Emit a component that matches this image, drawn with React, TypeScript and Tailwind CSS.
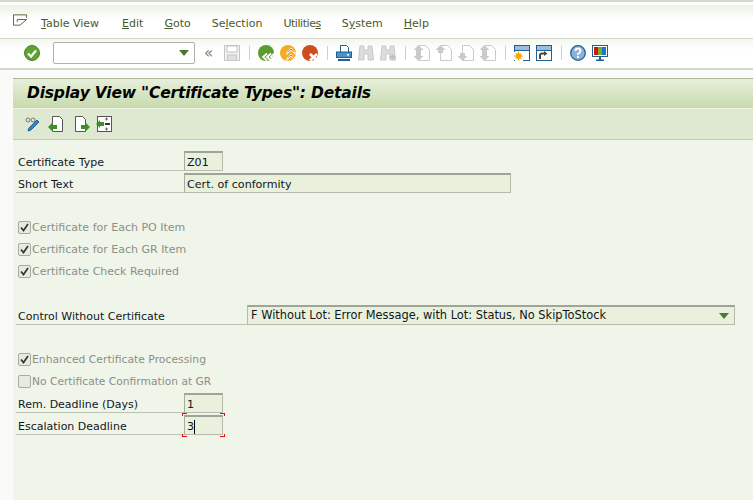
import React from "react";

// before mnemonic, mnemonic, after, spacing fix for the item
const menus: [string, string, string, string][] = [
  ["", "T", "able View", "mr-[2px]"],
  ["", "E", "dit", ""],
  ["", "G", "oto", ""],
  ["Se", "l", "ection", ""],
  ["Utilitie", "s", "", "tracking-[-0.450px]"],
  ["S", "y", "stem", ""],
  ["", "H", "elp", ""],
];

function Sep() {
  return <div className="w-px h-[14px] ml-[3px] mr-[2px] bg-[#c3dca8]" />;
}

function Icon({ children, className = "" }: { children: React.ReactNode; className?: string }) {
  return (
    <svg viewBox="0 0 16 16" className={`w-4 h-4 shrink-0 ${className}`}>
      {children}
    </svg>
  );
}

// grey page with a corner fold, used by the four disabled nav buttons
function NavPage({ up, down }: { up?: boolean; down?: boolean }) {
  return (
    <Icon>
      <path d="M4.500 0.500h7l4 4v11h-11z" fill="#fff" stroke="#cacaca" />
      {up && <path d="M4.500 0L9.500 5H7v3H2V5H-0.500z" fill="#cacaca" />}
      {down && <path d="M4.500 16L9.500 11H7V8H2v3H-0.500z" fill="#cacaca" />}
    </Icon>
  );
}

function WindowIcon({ children }: { children: React.ReactNode }) {
  return (
    <Icon>
      <rect x="0.500" y="0.500" width="15" height="15" fill="#fff" stroke="#1f6090" />
      <rect x="1" y="1" width="14" height="4" fill="#9dbde0" />
      <path d="M0 5.500h16" stroke="#1f6090" />
      {children}
    </Icon>
  );
}

function Binoculars({ plus }: { plus?: boolean }) {
  return (
    <Icon>
      <path d="M2 1h4v4h4V1h4l1.500 14H10V9H6v6H0.500z" fill="#dcdcdc" stroke="#c8c8c8" />
      {plus && <path d="M12.500 9v6M9.500 12h6" stroke="#c0c0c0" strokeWidth="2" />}
    </Icon>
  );
}

function Toolbar() {
  return (
    <div className="flex items-center h-[31px] shrink-0 pl-[24px] pb-px bg-gradient-to-b from-[#f4f8f0] to-white to-40% border-b-2 border-[#d3d8cc]">
      <Icon>
        <circle cx="8" cy="8" r="7.500" fill="#5fa335" stroke="#48802a" />
        <path d="M4 8.500l3 3 5-6" fill="none" stroke="#fff" strokeWidth="2.200" />
      </Icon>
      <div className="ml-[13px] w-[142px] h-[22px] flex items-center justify-end pr-[5px] bg-white rounded-[2px] border border-[#b0b3a8]">
        <div className="w-0 h-0 border-x-[5px] border-x-transparent border-t-[6px] border-t-[#4b7a32]" />
      </div>
      <span className="ml-[9px] w-[11px] text-[15px] leading-none text-[#777]">«</span>
      <div className="ml-[9px] flex items-center gap-[6px]">
        <Icon>
          <path d="M0.500 0.500h15v15h-15z" fill="#f2f2f2" stroke="#c4c4c4" />
          <rect x="3" y="1" width="10" height="6" fill="#fff" stroke="#c4c4c4" />
          <rect x="3.500" y="10" width="9" height="5.500" fill="#e0e0e0" stroke="#c4c4c4" />
        </Icon>
        <Sep />
        <Icon>
          <circle cx="8" cy="8" r="8" fill="#5b9c2e" />
          <path d="M9 8.500l-4 3.500 4 3.500M13 8.500l-4 3.500 4 3.500M16.500 8.500l-3.500 3.500 3.500 3.500" fill="none" stroke="#fff" strokeWidth="1.800" />
        </Icon>
        <Icon>
          <circle cx="8" cy="8" r="8" fill="#f7ab1e" />
          <path d="M6.500 7l4.500-4.500L15.500 7v3L11 5.500 6.500 10zM6.500 13l4.500-4.500 4.500 4.500v3L11 11.500 6.500 16z" fill="#fff" />
          <path d="M7.500 7l3.500-3 3.500 3M7.500 13l3.500-3 3.500 3" fill="none" stroke="#e2671a" />
        </Icon>
        <Icon>
          <circle cx="8" cy="8" r="8" fill="#cf4f1c" />
          <path d="M8 9l7 6.500M15 9l-7 6.500" stroke="#fff" strokeWidth="2.600" />
        </Icon>
        <Sep />
        <Icon>
          <path d="M4.500 0.500h6l2 2v5h-8z" fill="#fff" stroke="#1f6090" />
          <rect x="0.500" y="7" width="15" height="5.500" fill="#4d93c8" stroke="#1f6090" />
          <rect x="2" y="14" width="12" height="2" fill="#1f6090" />
          <rect x="11" y="9" width="2" height="1.500" fill="#fff" />
        </Icon>
        <Binoculars />
        <Binoculars plus />
        <Sep />
        <NavPage up down />
        <NavPage up />
        <NavPage down />
        <NavPage up down />
        <Sep />
        <WindowIcon>
          <path d="M0 7h1v9h8v-1H0z" fill="#fff" />
          <path d="M4.500 6.500v9M0 11h9M1.500 8l6 6M7.500 8l-6 6" stroke="#f7a600" />
          <circle cx="4.500" cy="11" r="2.800" fill="#f7a600" />
        </WindowIcon>
        <WindowIcon>
          <path d="M4 14v-3.500q0-2 2-2h3" fill="none" stroke="#444" strokeWidth="2" />
          <path d="M8 6l3.500 2.500L8 11z" fill="#444" />
        </WindowIcon>
        <Sep />
        <Icon>
          <circle cx="8" cy="8" r="7.300" fill="#8db1d8" stroke="#1f6090" strokeWidth="1.300" />
          <path d="M5.500 6q0-2.500 2.500-2.500T10.500 6q0 1.500-2.500 2.800V10" fill="none" stroke="#fff" strokeWidth="1.800" />
          <rect x="7" y="11" width="2" height="2" fill="#fff" />
        </Icon>
        <Icon>
          <rect x="0.500" y="0.500" width="15" height="11" fill="#fff" stroke="#1f6090" />
          <rect x="2" y="2" width="4" height="8" fill="#cf1414" />
          <rect x="6" y="2" width="4" height="8" fill="#7cab2c" />
          <rect x="10" y="2" width="4" height="8" fill="#1a78c6" />
          <path d="M7 12h2v2.500H7zM4 14.500h8V16H4z" fill="#1f6090" />
        </Icon>
      </div>
    </div>
  );
}

function AppToolbar() {
  return (
    <div className="flex items-center h-[31px] shrink-0 pl-[12px] bg-[#dfe8d0] border-b border-[#c0cdb0]">
      <Icon>
        <circle cx="3" cy="4" r="2" fill="none" stroke="#777" />
        <circle cx="8" cy="4" r="2" fill="none" stroke="#777" />
        <path d="M3 15l1-3 8-8 2 2-8 8z" fill="#3b84c4" stroke="#1f6090" />
      </Icon>
      <Icon className="ml-[7px]">
        <path d="M4.500 0.500h7l3 3v12h-10z" fill="#fff" stroke="#555" />
        <path d="M0 11l4.500-4.500V9H9v4H4.500v2.500z" fill="#3f8f28" />
      </Icon>
      <Icon className="ml-[10px]">
        <path d="M1.500 0.500h7l3 3v12h-10z" fill="#fff" stroke="#555" />
        <path d="M16 11l-4.500-4.500V9H7v4h4.500v2.500z" fill="#3f8f28" />
      </Icon>
      <Icon className="ml-[6px]">
        <rect x="1.500" y="0.500" width="14" height="15" fill="#fff" stroke="#555" />
        <path d="M0 8l4-4v2h4v4H4v2z" fill="#3f8f28" />
        <path d="M9 8h5" stroke="#333" strokeWidth="2" />
        <path d="M9 3h3M9 13h3M10.500 1.500v3M10.500 11.500v3" stroke="#666" />
      </Icon>
    </div>
  );
}

function Check({ checked, label, size = "text-[11px]" }: { checked: boolean; label: string; size?: string }) {
  return (
    <div className="flex items-center h-[22px] pl-[5px] text-[#8c8f88]">
      <div className="w-[13px] h-[13px] -mt-px flex items-center justify-center rounded-[2px] border border-[#a8ab9f] bg-[#e6ebdf]">
        {checked && (
          <svg viewBox="0 0 11 11" className="w-[11px] h-[11px]">
            <path d="M2 5.500l2.500 3L9 2" fill="none" stroke="#2c3a2a" strokeWidth="1.700" />
          </svg>
        )}
      </div>
      <span className={`ml-px pt-px ${size}`}>{label}</span>
    </div>
  );
}

function Field({
  label,
  children,
  labelWidth = "w-[168px]",
}: {
  label: string;
  children: React.ReactNode;
  labelWidth?: string;
}) {
  return (
    <div className="flex h-[22px] pl-[3px]">
      <div className={`${labelWidth} h-[20px] pl-[2px] flex items-end leading-[14px] text-[#10151c] border-b border-[#bcc2b4]`}>
        {label}
      </div>
      {children}
    </div>
  );
}

function Input({ w, children }: { w: string; children?: React.ReactNode }) {
  return (
    <div className={`${w} h-[20px] pl-[2px] pt-[3px] flex items-center text-[11.100px] bg-[#e9f1dd] text-[#10151c] border border-[#b7bbae] border-t-2 border-t-[#a0a498] border-l-[#a8ac9f]`}>
      {children}
    </div>
  );
}

function Corner({ className }: { className: string }) {
  return <div className={`absolute w-[5px] h-[3px] border-[#e01010] ${className}`} />;
}

export default function App() {
  return (
    <div className="w-[753px] h-[500px] overflow-hidden flex flex-col bg-[#fafbf8] text-[12px] font-['DejaVu_Sans',sans-serif]">
      <div className="h-[5px] shrink-0 bg-white border-t-2 border-[#d2dac8]" />
      <div className="h-[34px] shrink-0 flex items-center pl-[13px] bg-gradient-to-b from-[#e9f1e2] to-white to-40% border-b border-[#d3d8cc]">
        <svg viewBox="0 0 16 12" className="w-[15px] h-[12px] -mt-[4px] shrink-0">
          <path d="M0.500 0.500h14v3M0.500 0.500v11h7l7-6h-10v2.500" fill="none" stroke="#47672f" />
        </svg>
        <div className="ml-[13px] flex gap-[21px] text-[#475a2b] text-[11px] pt-[6px]">
          {menus.map(([a, u, b, fix]) => (
            <span key={a + u + b} className={fix}>
              {a}
              <span className="underline">{u}</span>
              {b}
            </span>
          ))}
        </div>
      </div>
      <Toolbar />
      <div className="flex-1 pl-[13px] pt-[8px] flex flex-col min-h-0">
        <div className="h-[31px] shrink-0 flex items-center pl-[14px] bg-gradient-to-b from-[#e7efdb] to-[#c7dbac] border-t border-[#a9b89a] border-b border-b-[#eef3e6]">
          <h1 className="text-[15.500px] tracking-[-0.190px] font-bold italic text-black">Display View "Certificate Types": Details</h1>
        </div>
        <AppToolbar />
        <div className="flex-1 bg-[#f0f5ea] pt-[11px] text-[11px]">
          <Field label="Certificate Type">
            <Input w="w-[39px]">Z01</Input>
          </Field>
          <Field label="Short Text">
            <Input w="w-[327px]">Cert. of conformity</Input>
          </Field>
          <div className="h-[22px]" />
          <Check checked label="Certificate for Each PO Item" />
          <Check checked label="Certificate for Each GR Item" />
          <Check checked label="Certificate Check Required" />
          <div className="h-[22px]" />
          <Field label="Control Without Certificate" labelWidth="w-[231px]">
            <div className="w-[488px] h-[20px] pl-[3px] pr-[5px] pt-px flex items-center justify-between text-[11.400px] bg-[#e9f1dd] text-[#10151c] border border-[#b7bbae] border-t-2 border-t-[#a0a498]">
              <span>F Without Lot: Error Message, with Lot: Status, No SkipToStock</span>
              <div className="w-0 h-0 border-x-[5px] border-x-transparent border-t-[6px] border-t-[#4b7a32]" />
            </div>
          </Field>
          <div className="h-[22px]" />
          <Check checked label="Enhanced Certificate Processing" size="text-[10.800px]" />
          <Check checked={false} label="No Certificate Confirmation at GR" size="text-[10.700px]" />
          <Field label="Rem. Deadline (Days)">
            <Input w="w-[39px]">1</Input>
          </Field>
          <Field label="Escalation Deadline">
            <div className="relative">
              <Input w="w-[39px]">
                3<span className="w-px h-[14px] bg-black" />
              </Input>
              <Corner className="-left-[2px] -top-[2px] border-l border-t" />
              <Corner className="-right-[2px] -top-[2px] border-r border-t" />
              <Corner className="-left-[2px] bottom-0 border-l border-b" />
              <Corner className="-right-[2px] bottom-0 border-r border-b" />
            </div>
          </Field>
        </div>
      </div>
    </div>
  );
}
